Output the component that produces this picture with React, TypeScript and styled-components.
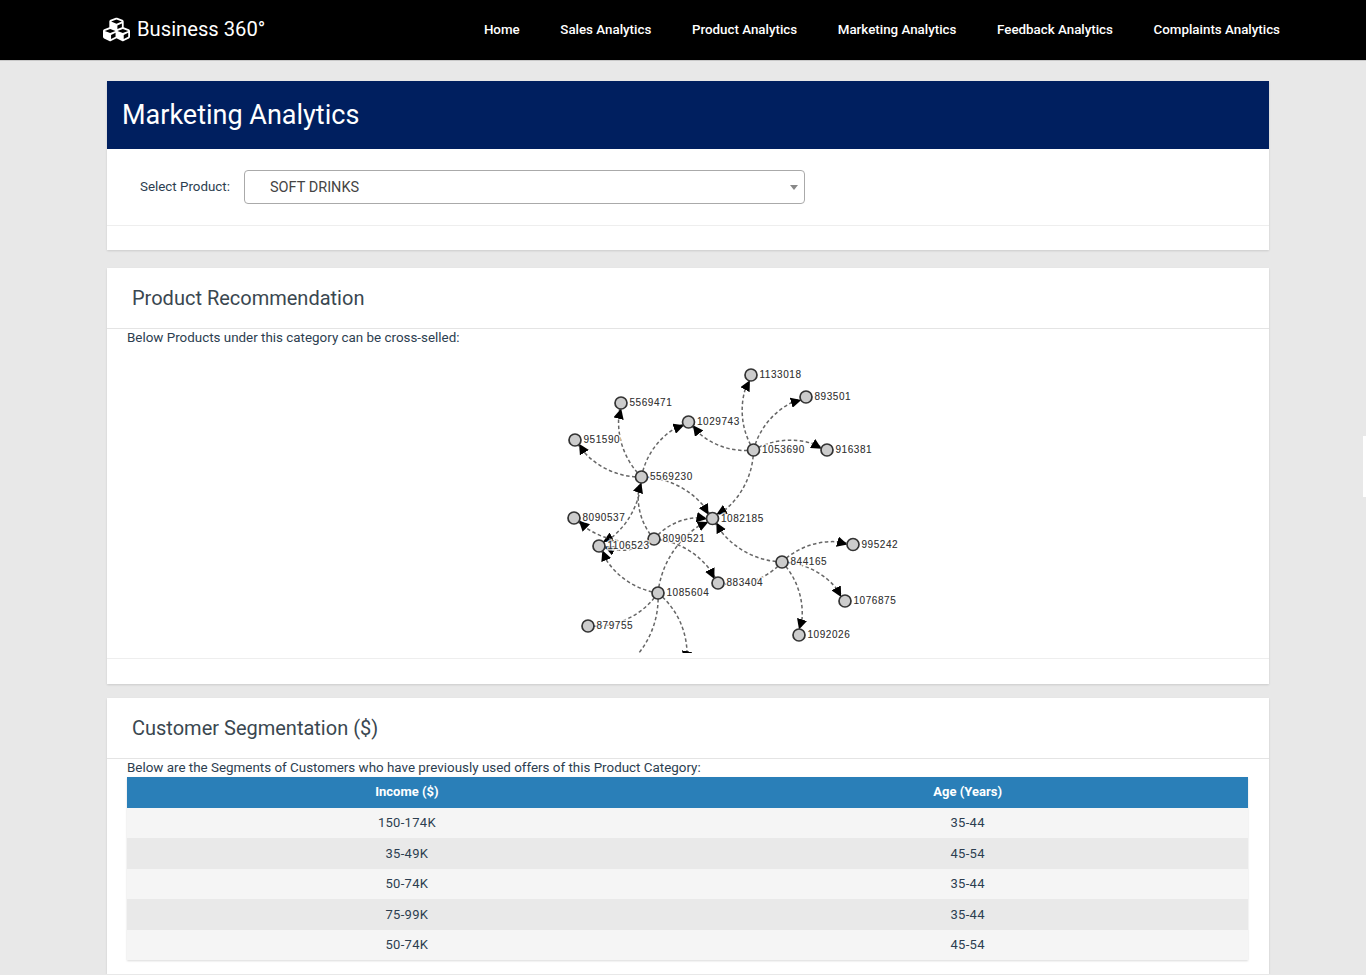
import React, { FC } from 'react';
import styled, { createGlobalStyle } from 'styled-components';
import { FaCubes } from 'react-icons/fa';

const GlobalStyle = createGlobalStyle`
    html, body {
        margin: 0;
        padding: 0;
        overflow: hidden;
        background: #e8e8e8;
        font-family: Roboto, "Liberation Sans", sans-serif;
        color: #2c3e50;
    }
    * {
        box-sizing: border-box;
    }
`;

const NavBar = styled.header`
    height: 61px;
    background: #000;
    border-bottom: 1px solid #c8c8c8;
    display: flex;
    align-items: center;
    justify-content: space-between;
    padding: 0 86px 2px 103px;
`;

const Brand = styled.div`
    display: flex;
    align-items: center;
    gap: 7px;
    color: #fff;
    font-size: 20.2px;
    line-height: 1;
`;

const NavLinks = styled.nav`
    display: flex;
    gap: 40.6px;
`;

const NavLink = styled.a`
    color: #fff;
    font-size: 13.35px;
    font-weight: 500;
`;

const SideTab = styled.div`
    position: fixed;
    right: 0;
    top: 436px;
    width: 3px;
    height: 61px;
    background: #fff;
`;

const Main = styled.main`
    width: 1162.5px;
    margin-left: 106.5px;
    padding-top: 20px;
`;

const Card = styled.section<{ $gap?: number }>`
    background: #fff;
    margin-bottom: ${(p) => p.$gap ?? 0}px;
    box-shadow: 0 1px 2px rgba(0, 0, 0, 0.12);
`;

const PageTitle = styled.h1`
    margin: 0;
    height: 68px;
    background: #001f5f;
    color: #fff;
    font-size: 27px;
    font-weight: 400;
    line-height: 68px;
    padding-left: 15.5px;
`;

const FilterRow = styled.div`
    height: 77px;
    display: flex;
    align-items: flex-start;
    padding: 21px 0 0 33.5px;
    border-bottom: 1px solid #eee;
`;

const FilterLabel = styled.label`
    width: 104px;
    font-size: 13.35px;
    line-height: 33px;
`;

const SelectBox = styled.div`
    position: relative;
    width: 561px;
    height: 34px;
    border: 1px solid #aaa;
    border-radius: 4px;
    padding-left: 25px;
    font-size: 14.5px;
    line-height: 33px;
    color: #444;
`;

const Caret = styled.span`
    position: absolute;
    right: 6px;
    top: 14px;
    border-style: solid;
    border-width: 5px 4px 0 4px;
    border-color: #888 transparent transparent transparent;
`;

const CardFooter = styled.div<{ $height: number }>`
    height: ${(p) => p.$height}px;
`;

const SectionHeader = styled.h2`
    margin: 0;
    height: 61px;
    padding-left: 25.5px;
    font-size: 20px;
    font-weight: 400;
    line-height: 61px;
    color: #3a4750;
    border-bottom: 1px solid #e4e4e4;
`;

const Intro = styled.p`
    margin: 0;
    padding-left: 20.5px;
    font-size: 13.4px;
    line-height: 18px;
    color: #2c3e50;
`;

const GraphWrap = styled.div`
    height: 312px;
    border-bottom: 1px solid #eee;
    padding-left: 393.5px;
`;

const Graph = styled.svg`
    display: block;
    overflow: hidden;
`;

const Link = styled.path`
    fill: none;
    stroke: #666;
    stroke-width: 1.5px;
    stroke-dasharray: 3.5 2.5;
`;

const Node = styled.circle`
    fill: #ccc;
    stroke: #333;
    stroke-width: 1.7px;
`;

const LabelShadow = styled.text`
    font: 10px "Liberation Sans", sans-serif;
    letter-spacing: 0.55px;
    stroke: #fff;
    stroke-width: 3px;
    stroke-opacity: 0.8;
`;

const Label = styled.text`
    font: 10px "Liberation Sans", sans-serif;
    letter-spacing: 0.55px;
    fill: #333;
`;

const TableWrap = styled.div`
    padding: 0 21px 14px 20px;
`;

const Table = styled.table`
    width: 100%;
    border-collapse: collapse;
    table-layout: fixed;
    box-shadow: 0 1px 2px rgba(0, 0, 0, 0.15);
`;

const Th = styled.th`
    height: 30.5px;
    background: #2a7fb8;
    color: #fff;
    font-size: 13px;
    font-weight: 700;
    text-align: center;
    padding: 0 0 1px;
`;

const Row = styled.tr`
    background: #f5f5f5;
    &:nth-child(even) {
        background: #e9e9e9;
    }
`;

const Td = styled.td`
    height: 30.5px;
    font-size: 13px;
    letter-spacing: 0.3px;
    text-align: center;
    padding: 0;
    color: #2c3e50;
`;

// node positions are taken in page coordinates, the svg box starts at (500, 347)
const OX = 500;
const OY = 347;

const nodes: { id: string; x: number; y: number; hidden?: boolean }[] = [
    { id: '1133018', x: 751, y: 375 },
    { id: '893501', x: 806, y: 397 },
    { id: '916381', x: 827, y: 450 },
    { id: '1053690', x: 753.5, y: 450 },
    { id: '1029743', x: 688.5, y: 422 },
    { id: '5569471', x: 621, y: 403 },
    { id: '951590', x: 575, y: 440 },
    { id: '5569230', x: 641.5, y: 477 },
    { id: '1082185', x: 712.5, y: 518.5 },
    { id: '8090537', x: 574, y: 518 },
    { id: '1106523', x: 599, y: 546 },
    { id: '8090521', x: 654, y: 539 },
    { id: '995242', x: 853, y: 544.5 },
    { id: '844165', x: 782, y: 562 },
    { id: '883404', x: 718, y: 583 },
    { id: '1076875', x: 845, y: 601 },
    { id: '1085604', x: 658, y: 593 },
    { id: '879755', x: 588, y: 626 },
    { id: '1092026', x: 799, y: 635 },
    { id: 'off1', x: 618, y: 672, hidden: true },
    { id: 'off2', x: 686, y: 667, hidden: true },
];

const edges: [string, string][] = [
    ['1053690', '1133018'],
    ['1053690', '893501'],
    ['1053690', '916381'],
    ['1053690', '1029743'],
    ['1053690', '1082185'],
    ['5569230', '5569471'],
    ['5569230', '951590'],
    ['5569230', '1029743'],
    ['5569230', '1082185'],
    ['5569230', '1106523'],
    ['8090521', '5569230'],
    ['8090521', '8090537'],
    ['8090521', '1106523'],
    ['8090521', '1082185'],
    ['8090521', '883404'],
    ['1085604', '1082185'],
    ['1085604', '1106523'],
    ['1085604', '879755'],
    ['1085604', 'off1'],
    ['1085604', 'off2'],
    ['844165', '883404'],
    ['844165', '1082185'],
    ['844165', '995242'],
    ['844165', '1076875'],
    ['844165', '1092026'],
];

const arcPath = (from: string, to: string) => {
    const a = nodes.find((n) => n.id === from)!;
    const b = nodes.find((n) => n.id === to)!;
    const r = Math.hypot(b.x - a.x, b.y - a.y);
    return `M${a.x - OX},${a.y - OY}A${r},${r} 0 0,1 ${b.x - OX},${b.y - OY}`;
};

const menu = ['Home', 'Sales Analytics', 'Product Analytics', 'Marketing Analytics', 'Feedback Analytics', 'Complaints Analytics'];

const segments = [
    ['150-174K', '35-44'],
    ['35-49K', '45-54'],
    ['50-74K', '35-44'],
    ['75-99K', '35-44'],
    ['50-74K', '45-54'],
];

const App: FC = () => (
    <React.Fragment>
        <GlobalStyle />
        <NavBar>
            <Brand>
                <FaCubes size={27} />
                Business 360°
            </Brand>
            <NavLinks>
                {menu.map((m) => (
                    <NavLink key={m}>{m}</NavLink>
                ))}
            </NavLinks>
        </NavBar>
        <SideTab />
        <Main>
            <Card $gap={18}>
                <PageTitle>Marketing Analytics</PageTitle>
                <FilterRow>
                    <FilterLabel>Select Product:</FilterLabel>
                    <SelectBox>
                        SOFT DRINKS
                        <Caret />
                    </SelectBox>
                </FilterRow>
                <CardFooter $height={24} />
            </Card>
            <Card $gap={14}>
                <SectionHeader>Product Recommendation</SectionHeader>
                <Intro>Below Products under this category can be cross-selled:</Intro>
                <GraphWrap>
                    <Graph width={400} height={306}>
                        <defs>
                            <marker id="arrow" viewBox="0 -5 10 10" refX={15} refY={-1.5} markerWidth={7} markerHeight={7} orient="auto">
                                <path d="M0,-5L10,0L0,5" fill="#000" />
                            </marker>
                        </defs>
                        {edges.map(([from, to]) => (
                            <Link key={from + to} d={arcPath(from, to)} markerEnd={to === '879755' || (from === '844165' && to === '883404') ? undefined : 'url(#arrow)'} />
                        ))}
                        {nodes
                            .filter((n) => !n.hidden)
                            .map((n) => (
                                <Node key={n.id} cx={n.x - OX} cy={n.y - OY} r={6} />
                            ))}
                        {nodes
                            .filter((n) => !n.hidden)
                            .map((n) => (
                                <React.Fragment key={n.id}>
                                    <LabelShadow x={n.x - OX + 8.5} y={n.y - OY + 3.3}>
                                        {n.id}
                                    </LabelShadow>
                                    <Label x={n.x - OX + 8.5} y={n.y - OY + 3.3}>
                                        {n.id}
                                    </Label>
                                </React.Fragment>
                            ))}
                    </Graph>
                </GraphWrap>
                <CardFooter $height={25} />
            </Card>
            <Card>
                <SectionHeader>Customer Segmentation ($)</SectionHeader>
                <Intro>Below are the Segments of Customers who have previously used offers of this Product Category:</Intro>
                <TableWrap>
                    <Table>
                        <thead>
                            <tr>
                                <Th>Income ($)</Th>
                                <Th>Age (Years)</Th>
                            </tr>
                        </thead>
                        <tbody>
                            {segments.map(([income, age], i) => (
                                <Row key={i}>
                                    <Td>{income}</Td>
                                    <Td>{age}</Td>
                                </Row>
                            ))}
                        </tbody>
                    </Table>
                </TableWrap>
            </Card>
        </Main>
    </React.Fragment>
);

export default App;
